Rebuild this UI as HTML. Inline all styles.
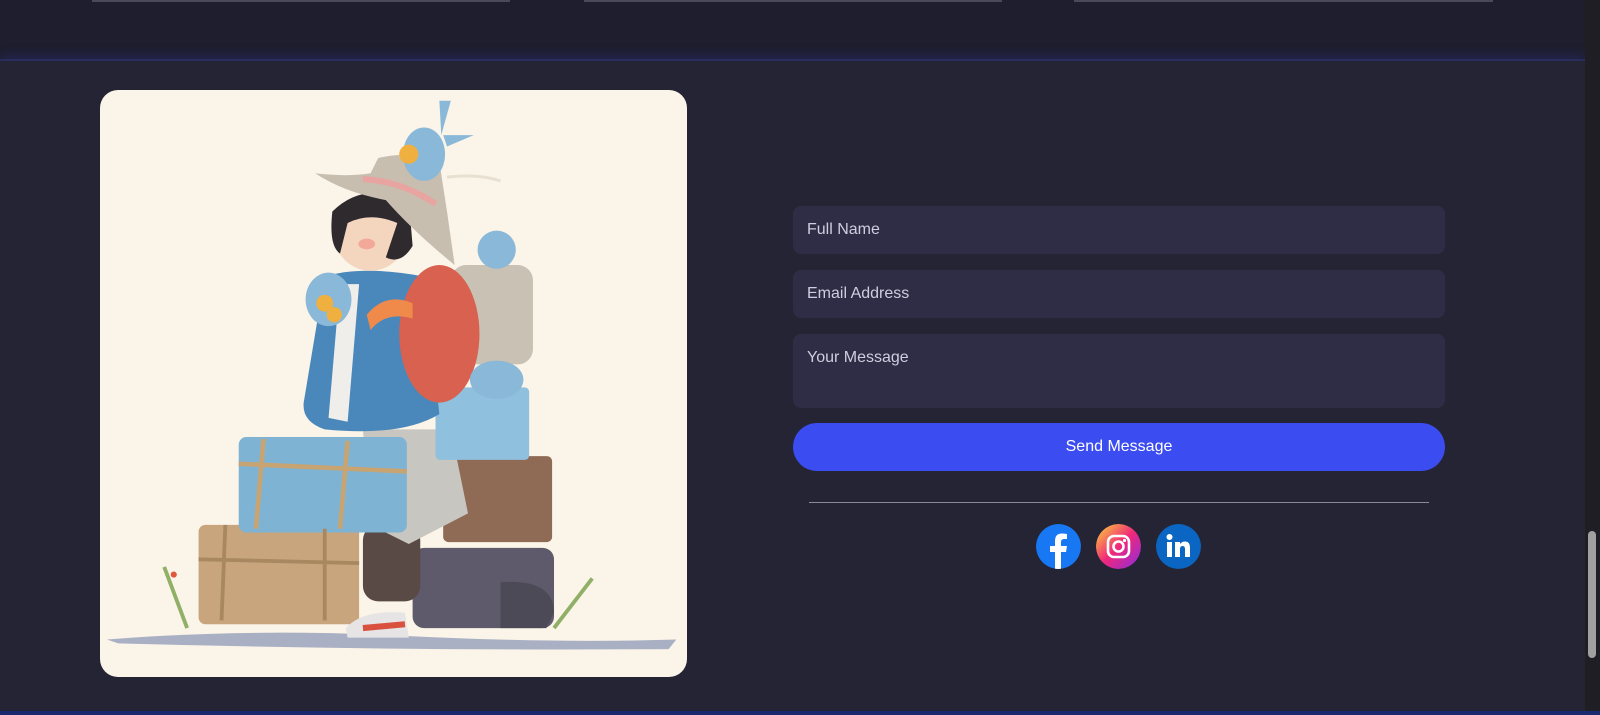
<!DOCTYPE html>
<html><head><meta charset="utf-8"><style>
*{box-sizing:border-box;margin:0;padding:0}
html,body{width:1600px;height:715px;overflow:hidden;background:#1f1e2e;font-family:"Liberation Sans",sans-serif}
.line{position:absolute;top:0;height:2px;background:#4a4958}
.sec{position:absolute;left:0;top:59px;width:1585px;height:652px;background:#252435;border-top:2px solid #2a2d5c;box-shadow:0 -4px 10px rgba(40,50,140,.35)}
.img{position:absolute;left:100px;top:90px;width:587px;height:587px;border-radius:18px;background:#fbf4e8;overflow:hidden}
.inp{position:absolute;left:793px;width:652px;background:#2e2d45;border-radius:8px;color:#cfcde0;font-size:16px;padding:15px 14px}
.btn{position:absolute;left:793px;top:423px;width:652px;height:48px;border-radius:24px;background:#3b4cf0;color:#fff;font-size:16px;text-align:center;line-height:48px}
.div{position:absolute;left:809px;top:502px;width:620px;height:1px;background:#8a8996}
.ic{position:absolute;top:524px;width:45px;height:45px;border-radius:50%}
.sb{position:absolute;left:1585px;top:0;width:15px;height:711px;background:#1f1e24}
.th{position:absolute;left:1588px;top:531px;width:8px;height:127px;background:#a0a0a0;border-radius:4px}
.bb{position:absolute;left:0;top:711px;width:1600px;height:4px;background:#1a2a70}
</style></head><body>
<div class="line" style="left:92px;width:418px"></div>
<div class="line" style="left:584px;width:418px"></div>
<div class="line" style="left:1074px;width:419px"></div>
<div class="sec"></div>
<div class="img">
<svg width="587" height="587" viewBox="12 12 1536 1536">
<path d="M30 1450 Q400 1420 800 1440 T1520 1450 L1500 1475 Q800 1480 60 1460Z" fill="#a9b0c4"/>
<path d="M180 1260 L240 1420 M1300 1290 L1200 1420" stroke="#8fb066" stroke-width="10"/>
<circle cx="205" cy="1280" r="8" fill="#e0583e"/>
<rect x="830" y="1210" width="370" height="210" rx="30" fill="#5e5a6b"/>
<rect x="270" y="1150" width="420" height="260" rx="18" fill="#c9a57e"/>
<rect x="910" y="970" width="285" height="225" rx="14" fill="#8f6a55"/>
<rect x="700" y="1150" width="150" height="200" rx="40" fill="#5a4a45"/>
<path d="M700 900 L930 900 L975 1120 L820 1200 L720 1150Z" fill="#c8c6c0"/>
<rect x="890" y="790" width="245" height="190" rx="12" fill="#8fc0dd"/>
<path d="M1060 1300 Q1200 1290 1200 1380 L1180 1420 L1060 1420Z" fill="#4d4a58"/>
<rect x="375" y="920" width="440" height="250" rx="20" fill="#7fb3d3"/>
<path d="M375 990 L815 1010 M440 925 L420 1160 M660 930 L640 1160" stroke="#c8a472" stroke-width="12"/>
<path d="M270 1240 L690 1250 M340 1150 L330 1400 M600 1160 L600 1400" stroke="#a88860" stroke-width="10"/>
<path d="M655 1420 Q700 1370 810 1380 L820 1445 L660 1445Z" fill="#e6e4e4"/>
<path d="M700 1420 L810 1410" stroke="#d9503e" stroke-width="16"/>
<rect x="930" y="470" width="215" height="260" rx="40" fill="#c9c2b4"/>
<path d="M600 500 Q700 470 860 500 L900 860 Q800 920 600 900 Q540 880 545 830Z" fill="#4a87bb"/>
<path d="M640 520 L690 520 L660 880 L610 870Z" fill="#f0eeea"/>
<ellipse cx="900" cy="650" rx="105" ry="180" fill="#d9614f"/>
<path d="M710 600 Q760 540 830 570 L830 610 Q760 590 720 640Z" fill="#f08a4a"/>
<ellipse cx="1050" cy="770" rx="70" ry="50" fill="#8ab8d8"/>
<circle cx="1050" cy="430" r="50" fill="#8ab8d8"/>
<ellipse cx="610" cy="560" rx="60" ry="70" fill="#8ab8d8"/>
<circle cx="600" cy="570" r="22" fill="#f0b040"/><circle cx="625" cy="600" r="20" fill="#f0b040"/>
<circle cx="720" cy="390" r="95" fill="#f4d6bf"/>
<path d="M620 330 Q700 250 820 300 L830 420 Q800 470 760 450 L790 360 Q720 330 660 360 L640 440 Q610 420 620 330Z" fill="#2f2a2e"/>
<ellipse cx="710" cy="415" rx="22" ry="14" fill="#f3a99a"/>
<path d="M575 230 Q660 240 720 230 L740 190 Q820 170 900 200 L920 330 Q930 400 940 470 Q830 380 760 300 Q650 280 575 230Z" fill="#c8beb0"/>
<path d="M700 245 Q800 250 890 310" stroke="#e8a4a0" stroke-width="16" fill="none"/>
<ellipse cx="860" cy="180" rx="55" ry="70" fill="#8ab8d8"/>
<path d="M900 40 L930 40 L905 130Z M910 130 L990 130 L920 160Z" fill="#8ab8d8"/>
<circle cx="820" cy="180" r="25" fill="#f0b040"/>
<path d="M920 240 Q1000 230 1060 250" stroke="#e8e0d0" stroke-width="8" fill="none"/>
</svg>
</div>
<div class="inp" style="top:206px;height:48px">Full Name</div>
<div class="inp" style="top:270px;height:48px">Email Address</div>
<div class="inp" style="top:334px;height:74px">Your Message</div>
<div class="btn">Send Message</div>
<div class="div"></div>
<svg class="ic" style="left:1036px" viewBox="0 0 45 45"><circle cx="22.5" cy="22.5" r="22.5" fill="#1877f2"/><path d="M25 45 V28 H30 L31 22 H25 V18 Q25 15 28 15 H31 V10 Q28 9.5 26 9.5 Q19 9.5 19 17 V22 H14 V28 H19 V45Z" fill="#fff"/></svg>
<svg class="ic" style="left:1096px" viewBox="0 0 45 45"><defs><linearGradient id="g" x1="0" y1="0" x2="1" y2="1"><stop offset="0" stop-color="#fdd835"/><stop offset=".5" stop-color="#f0287a"/><stop offset="1" stop-color="#8a2be2"/></linearGradient></defs><circle cx="22.5" cy="22.5" r="22.5" fill="url(#g)"/><rect x="12" y="12" width="21" height="21" rx="6" fill="none" stroke="#fff" stroke-width="2.6"/><circle cx="22.5" cy="22.5" r="5" fill="none" stroke="#fff" stroke-width="2.6"/><circle cx="28.5" cy="16.5" r="1.6" fill="#fff"/></svg>
<svg class="ic" style="left:1156px" viewBox="0 0 45 45"><circle cx="22.5" cy="22.5" r="22.5" fill="#0a66c2"/><rect x="11" y="18" width="5" height="15" fill="#fff"/><circle cx="13.5" cy="13" r="3" fill="#fff"/><path d="M19 18 H24 V20 Q26 17.5 29 17.5 Q34 17.5 34 24 V33 H29 V25 Q29 22 26.5 22 Q24 22 24 25 V33 H19Z" fill="#fff"/></svg>
<div class="sb"></div><div class="th"></div>
<div class="bb"></div>
</body></html>
